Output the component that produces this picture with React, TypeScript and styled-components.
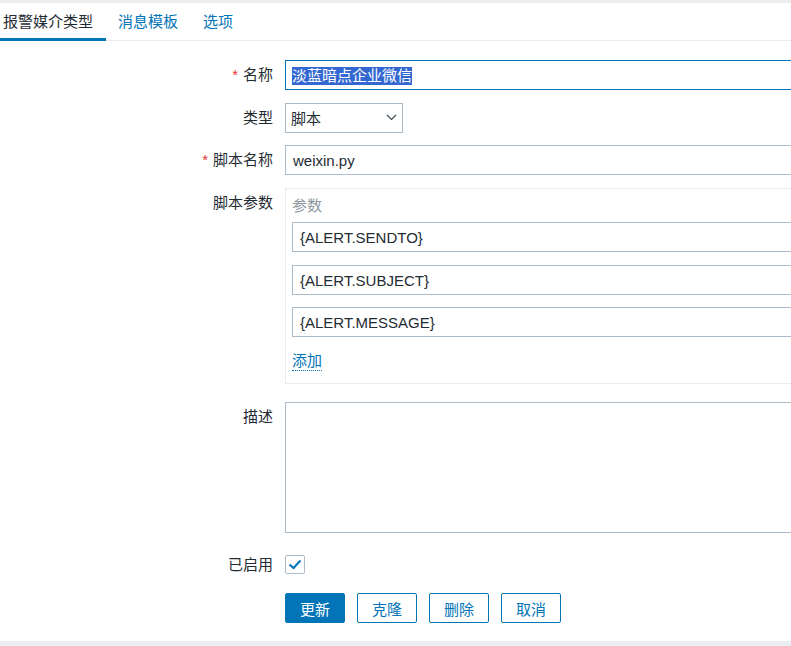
import React from "react";
import styled, { createGlobalStyle } from "styled-components";

const GlobalStyle = createGlobalStyle`
  html, body {
    margin: 0;
    padding: 0;
    background: #ebeef0;
  }
  body {
    font-family: "Liberation Sans", "Noto Sans CJK SC", sans-serif;
    font-size: 15px;
    color: #1f2c33;
    overflow: hidden;
  }
`;

const Page = styled.div`
  width: 791px;
  height: 646px;
  padding: 3px 0 5px;
  box-sizing: border-box;
  overflow: hidden;
`;

const Panel = styled.div`
  height: 638px;
  background: #fff;
`;

const TabBar = styled.div`
  display: flex;
  height: 38px;
  box-sizing: border-box;
  border-bottom: 1px solid #ebebeb;
`;

const Tab = styled.a<{ $active?: boolean }>`
  height: 38px;
  box-sizing: border-box;
  margin-bottom: -1px;
  padding: ${(p) => (p.$active ? "0 13px 0 3px" : "0 13px 0 12px")};
  line-height: 37px;
  color: ${(p) => (p.$active ? "#1f2c33" : "#0275b8")};
  border-bottom: 3px solid ${(p) => (p.$active ? "#0275b8" : "transparent")};
`;

const Form = styled.div`
  padding-top: 19px;
`;

const Row = styled.div<{ $gap: number }>`
  display: grid;
  grid-template-columns: 273px 620px;
  column-gap: 12px;
  margin-bottom: ${(p) => p.$gap}px;
`;

const Label = styled.div`
  line-height: 30px;
  text-align: right;
`;

const Star = styled.span`
  color: #e33734;
  margin-right: 5px;
`;

const Field = styled.div<{ $focus?: boolean }>`
  height: 30px;
  box-sizing: border-box;
  border: 1px solid ${(p) => (p.$focus ? "#0275b8" : "#acbbc7")};
  padding: 0 7px;
  line-height: 29px;
  background: #fff;
  white-space: nowrap;
`;

const Selected = styled.span`
  display: inline-block;
  line-height: 18px;
  margin-left: -1px;
  background: #3367d1;
  color: #fff;
  vertical-align: middle;
  margin-top: -2px;
`;

const SelectBox = styled.div`
  display: flex;
  align-items: center;
  justify-content: space-between;
  width: 118px;
  height: 30px;
  box-sizing: border-box;
  border: 1px solid #acbbc7;
  padding: 0 5px 2px 5px;
`;

const ParamsBox = styled.div`
  height: 196px;
  box-sizing: border-box;
  border: 1px solid #ebebeb;
  padding: 7px 0 0 6px;
`;

const ParamsHead = styled.div`
  color: #8c979e;
  line-height: 20px;
  margin-bottom: 6px;
`;

const ParamField = styled(Field)`
  margin-bottom: 12.5px;
`;

const AddLink = styled.a`
  display: inline-block;
  margin-top: 1px;
  line-height: 19px;
  color: #0275b8;
  border-bottom: 1px dotted #0275b8;
`;

const TextArea = styled.div`
  height: 131px;
  box-sizing: border-box;
  border: 1px solid #acbbc7;
`;

const CheckBox = styled.div`
  display: flex;
  align-items: center;
  justify-content: center;
  width: 20px;
  height: 19px;
  box-sizing: border-box;
  border: 1px solid #acbbc7;
  border-radius: 2px;
  margin-top: 5px;
`;

const Buttons = styled.div`
  display: flex;
  gap: 12px;
`;

const Button = styled.button<{ $primary?: boolean }>`
  width: 60px;
  height: 30px;
  padding: 0;
  font: inherit;
  border: 1px solid #0275b8;
  border-radius: 2px;
  background: ${(p) => (p.$primary ? "#0275b8" : "#fff")};
  color: ${(p) => (p.$primary ? "#fff" : "#0275b8")};
`;

const params = ["{ALERT.SENDTO}", "{ALERT.SUBJECT}", "{ALERT.MESSAGE}"];

export default function App() {
  return (
    <Page>
      <GlobalStyle />
      <Panel>
        <TabBar>
          <Tab $active>报警媒介类型</Tab>
          <Tab>消息模板</Tab>
          <Tab>选项</Tab>
        </TabBar>
        <Form>
          <Row $gap={13}>
            <Label>
              <Star>*</Star>名称
            </Label>
            <Field $focus>
              <Selected>淡蓝暗点企业微信</Selected>
            </Field>
          </Row>
          <Row $gap={12}>
            <Label>类型</Label>
            <SelectBox>
              脚本
              <svg width="11" height="7" viewBox="0 0 11 7" fill="none">
                <path d="M1 1l4.5 4.5L10 1" stroke="#3b4a52" strokeWidth="1.2" />
              </svg>
            </SelectBox>
          </Row>
          <Row $gap={13}>
            <Label>
              <Star>*</Star>脚本名称
            </Label>
            <Field>weixin.py</Field>
          </Row>
          <Row $gap={18}>
            <Label>脚本参数</Label>
            <ParamsBox>
              <ParamsHead>参数</ParamsHead>
              {params.map((param) => (
                <ParamField key={param}>{param}</ParamField>
              ))}
              <AddLink>添加</AddLink>
            </ParamsBox>
          </Row>
          <Row $gap={17}>
            <Label>描述</Label>
            <TextArea />
          </Row>
          <Row $gap={13}>
            <Label>已启用</Label>
            <div>
              <CheckBox>
                <svg width="14" height="11" viewBox="0 0 14 11" fill="none">
                  <path d="M1.5 5.5l4 3.5 7-7.5" stroke="#0275b8" strokeWidth="2" />
                </svg>
              </CheckBox>
            </div>
          </Row>
          <Row $gap={0}>
            <div />
            <Buttons>
              <Button $primary>更新</Button>
              <Button>克隆</Button>
              <Button>删除</Button>
              <Button>取消</Button>
            </Buttons>
          </Row>
        </Form>
      </Panel>
    </Page>
  );
}
